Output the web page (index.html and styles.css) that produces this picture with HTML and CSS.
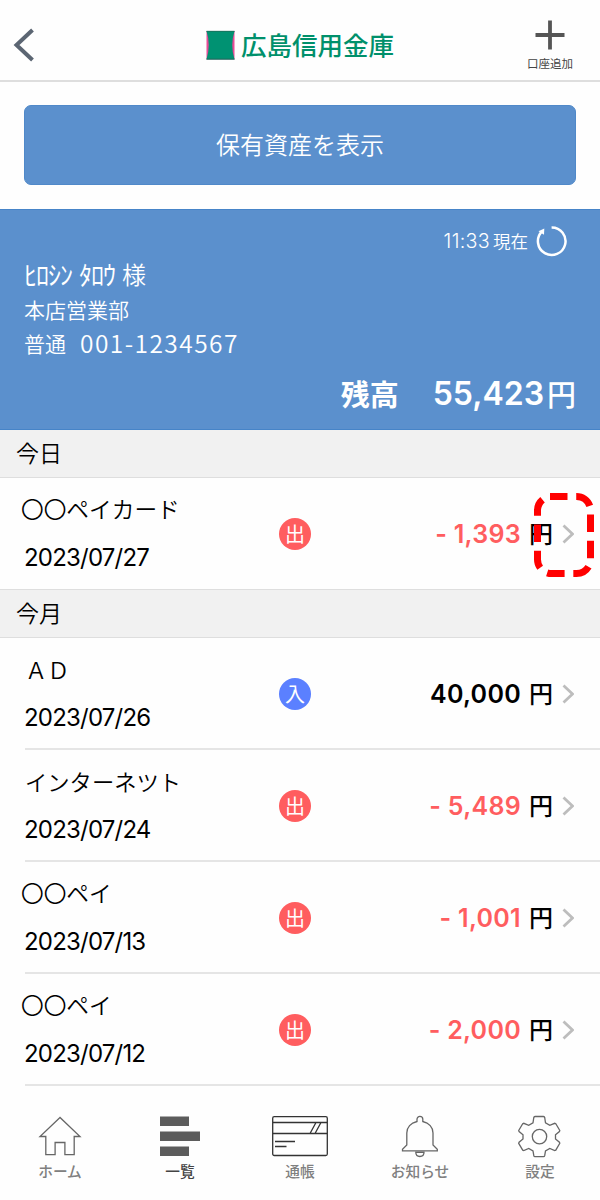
FILE: index.html
```html
<!DOCTYPE html>
<html lang="ja">
<head>
  <meta charset="UTF-8">
  <title>広島信用金庫</title>
  <link rel="stylesheet" href="styles.css">
</head>
<body>
  <header class="header">
    <button class="back-btn" aria-label="戻る">
      <svg width="24" height="36" viewBox="0 0 24 36"><path d="M20.500 3 4.500 18l16 15" fill="none" stroke="#5b6572" stroke-width="4"/></svg>
    </button>
    <div class="brand">
      <svg width="29" height="30" viewBox="0 0 29 30">
        <path d="M.5 1h28v28.500H.5z" fill="#e84a97"/>
        <path d="M.5 1h28q-4.500 14 0 28.500H.5q4.500-14.500 0-28.500z" fill="#009272"/>
        <path d="M.5 1.300h28M.5 29h28" stroke="#1e6b58" stroke-width=".8"/>
      </svg>
      <h1>広島信用金庫</h1>
    </div>
    <button class="add-btn">
      <svg width="30" height="30" viewBox="0 0 30 30"><path d="M15 .5v29M.5 15h29" stroke="#555" stroke-width="3.800"/></svg>
      <span>口座追加</span>
    </button>
  </header>

  <div class="actions">
    <button class="assets-btn">保有資産を表示</button>
  </div>

  <section class="account">
    <div class="updated">
      <span class="time">11:33</span><span>現在</span>
      <svg width="32" height="32" viewBox="0 0 32 32">
        <path d="M15.600 2.400A13.800 13.800 0 1 1 6 6.400" fill="none" stroke="#fff" stroke-width="2.500"/>
        <path d="M2.500 6.200 8.300 3.600 8 9.700z" fill="#fff"/>
      </svg>
    </div>
    <div class="holder"><span class="kana">ﾋﾛｼﾝ</span><span class="kana">ﾀﾛｳ</span><span>様</span></div>
    <div class="branch">本店営業部</div>
    <div class="number"><span>普通</span><span class="digits">001-1234567</span></div>
    <div class="balance"><span>残高</span><span class="total">55,423</span><span class="yen">円</span></div>
  </section>

  <main>
    <h2 class="day">今日</h2>
    <div class="row last">
      <div class="info"><p class="name masked">〇〇ペイカード</p><p class="date">2023/07/27</p></div>
      <span class="badge out">出</span>
      <div class="amount minus">- 1,393</div><span class="unit">円</span>
      <svg class="arrow" width="12" height="20" viewBox="0 0 12 20"><path d="m1.500 1.500 9 8.500-9 8.500"/></svg>
      <svg class="marker" width="60" height="84" viewBox="0 0 60 84"><path d="M16 3.500h26.500a14 14 0 0 1 14 14v49a14 14 0 0 1-14 14h-25a14 14 0 0 1-14-14v-49a14 14 0 0 1 14-14"/></svg>
    </div>

    <h2 class="day">今月</h2>
    <div class="row">
      <div class="info"><p class="name">ＡＤ</p><p class="date">2023/07/26</p></div>
      <span class="badge in">入</span>
      <div class="amount">40,000</div><span class="unit">円</span>
      <svg class="arrow" width="12" height="20" viewBox="0 0 12 20"><path d="m1.500 1.500 9 8.500-9 8.500"/></svg>
    </div>
    <div class="row">
      <div class="info"><p class="name">インターネツト</p><p class="date">2023/07/24</p></div>
      <span class="badge out">出</span>
      <div class="amount minus">- 5,489</div><span class="unit">円</span>
      <svg class="arrow" width="12" height="20" viewBox="0 0 12 20"><path d="m1.500 1.500 9 8.500-9 8.500"/></svg>
    </div>
    <div class="row">
      <div class="info"><p class="name masked">〇〇ペイ</p><p class="date">2023/07/13</p></div>
      <span class="badge out">出</span>
      <div class="amount minus">- 1,001</div><span class="unit">円</span>
      <svg class="arrow" width="12" height="20" viewBox="0 0 12 20"><path d="m1.500 1.500 9 8.500-9 8.500"/></svg>
    </div>
    <div class="row">
      <div class="info"><p class="name masked">〇〇ペイ</p><p class="date">2023/07/12</p></div>
      <span class="badge out">出</span>
      <div class="amount minus">- 2,000</div><span class="unit">円</span>
      <svg class="arrow" width="12" height="20" viewBox="0 0 12 20"><path d="m1.500 1.500 9 8.500-9 8.500"/></svg>
    </div>
  </main>

  <nav class="tabs">
    <a class="tab">
      <svg width="44" height="44" viewBox="0 0 44 44"><path d="M22 3.500 2 22.500h5.800v18.200h9.300V28.500h9.800v12.200h9.300V22.500H42z"/></svg>
      <span>ホーム</span>
    </a>
    <a class="tab active">
      <svg width="44" height="44" viewBox="0 0 44 44"><path d="M2 2.500h29v9.500H2zM2 17.500h40v9.500H2zM2 32.500h29v9.500H2z"/></svg>
      <span>一覧</span>
    </a>
    <a class="tab passbook">
      <svg width="56" height="44" viewBox="0 0 56 44"><rect x=".7" y="2.700" width="54.600" height="38.800" rx="1.500"/><path d="M1 8.500h54M1 19.500h54M3 27.500h20M3 32.500h11.500M44 8.500l-6 11M49 8.500l-6 11"/></svg>
      <span>通帳</span>
    </a>
    <a class="tab">
      <svg width="44" height="44" viewBox="0 0 44 44"><path d="M19 7.500V5.300a2.900 2.900 0 0 1 5.800 0v2.200C31 9 35 13.500 35 19v12l4.300 4.200v1.600H4.500v-1.600L8.800 31V19c0-5.500 4-10 10.200-11.500zM17.800 38.300H26c0 5.600-8.200 5.600-8.200 0z"/></svg>
      <span>お知らせ</span>
    </a>
    <a class="tab">
      <svg width="44" height="44" viewBox="0 0 44 44"><path d="M17 2.500h8.500q1 0 1.200 1l.8 5.300 4.300 2.500 4.900-2 1.100.4 4 6.800-.4 1.100-3.900 3.200v4.200l3.900 3.200.4 1.100-4 6.800-1.100.4-4.900-2-4.300 2.500-.8 4.700q-.2 1-1.200 1H17q-1 0-1.200-1L15 37l-4.300-2.500-4.900 2-1.100-.4-4-6.800.4-1.100L5 25v-4.200l-3.900-3.200-.4-1.100 4-6.800 1.100-.4 4.900 2L15 8.800l.8-5.300q.2-1 1.200-1z"/><circle cx="21.500" cy="22.600" r="7.200"/></svg>
      <span>設定</span>
    </a>
  </nav>
</body>
</html>
```

FILE: styles.css
```css
:root {
  --blue: #5b90cd;
  --red: #ff5d5f;
  --line: #dedede;
  --jp: "Noto Sans CJK JP", sans-serif;
  --num: Inter, "Noto Sans CJK JP", sans-serif;
}

* {
  margin: 0;
  padding: 0;
  box-sizing: border-box;
}

body {
  width: 600px;
  height: 1200px;
  overflow: hidden;
  background: #fefefe;
  color: #000;
  font-family: var(--jp);
}

button {
  border: none;
  background: none;
  font-family: inherit;
}

svg {
  display: block;
  flex: none;
}

.header {
  height: 82px;
  border-bottom: 2px solid var(--line);
  display: grid;
  grid-template-columns: 100px 1fr 100px;
}

.back-btn {
  display: flex;
  align-items: flex-start;
  padding: 27px 0 0 12px;
}

.brand {
  display: flex;
  align-items: flex-start;
  justify-content: center;
  gap: 6px;
  padding-top: 30px;
}

.brand h1 {
  margin-top: -1px;
  color: #00906b;
  font-size: 25.500px;
  font-weight: 500;
  line-height: 30px;
}

.add-btn {
  display: flex;
  flex-direction: column;
  align-items: center;
  padding-top: 20px;
}

.add-btn span {
  margin-top: 5px;
  font-size: 11.500px;
  line-height: 16px;
  color: #444;
}

.actions {
  height: 127px;
  padding: 23px 24px 0;
}

.assets-btn {
  width: 100%;
  height: 80px;
  padding-bottom: 3px;
  border: 1px solid #5089c9;
  border-radius: 7px;
  background: var(--blue);
  color: #fff;
  font-size: 24px;
  font-weight: 350;
}

.account {
  height: 221px;
  padding: 15px 24px 0;
  background: var(--blue);
  border-top: 1px solid #4684c8;
  border-bottom: 1px solid #4684c8;
  color: #fff;
  font-weight: 350;
}

.updated {
  display: flex;
  align-items: center;
  justify-content: flex-end;
  height: 31px;
  padding-right: 8px;
  font-size: 17.500px;
  line-height: 28px;
}

.updated .time {
  font-family: var(--num);
  font-size: 19.700px;
  letter-spacing: .3px;
  margin-right: 3px;
}

.updated svg {
  margin-left: 8px;
}

.holder {
  display: flex;
  height: 36px;
  font-size: 24px;
  line-height: 35px;
}

.kana {
  margin-right: 7px;
  font-size: 26px;
  font-weight: 400;
  letter-spacing: -1px;
}

.branch {
  font-size: 21px;
  line-height: 34px;
}

.number {
  display: flex;
  font-size: 21px;
  line-height: 34px;
}

.digits {
  margin-left: 14px;
  font-size: 24.500px;
  letter-spacing: 1.450px;
}

.balance {
  display: flex;
  justify-content: flex-end;
  margin-top: 14px;
  font-size: 29px;
  font-weight: 700;
  line-height: 38px;
}

.total {
  margin: 1px 3px 0 34px;
  font-family: var(--num);
  font-size: 32px;
  font-weight: 600;
}

.yen {
  font-weight: 500;
}

.day {
  height: 48px;
  padding-left: 16px;
  background: #f1f1f1;
  border-bottom: 1px solid var(--line);
  font-size: 23px;
  font-weight: 350;
  line-height: 45px;
}

.row {
  position: relative;
  display: flex;
  align-items: center;
  height: 112px;
  margin-left: 25px;
  padding: 1px 26px 0 0;
  border-bottom: 2px solid #e5e5e5;
}

.row.last {
  margin-left: 0;
  padding: 0 26px 0 25px;
  border-bottom: 1px solid var(--line);
}

.info {
  width: 254px;
}

.name {
  margin-top: -1px;
  font-size: 22.300px;
  font-weight: 350;
  line-height: 36px;
}

.name.masked {
  margin-left: -4px;
  font-size: 22.700px;
}

.date {
  margin: 13px 0 0 -1px;
  font-family: var(--num);
  font-size: 24px;
  letter-spacing: -.800px;
  line-height: 36px;
}

.badge {
  width: 32px;
  height: 32px;
  border-radius: 50%;
  color: #fff;
  font-size: 20px;
  line-height: 31px;
  text-align: center;
}

.badge.out {
  background: var(--red);
}

.badge.in {
  background: #5b80ff;
}

.amount {
  margin-left: auto;
  font-family: var(--num);
  font-size: 25px;
  font-weight: 600;
  letter-spacing: .3px;
}

.amount.minus {
  color: var(--red);
}

.unit {
  margin: -3px 9px 0 8px;
  font-size: 24px;
  font-weight: 500;
}

.arrow path {
  fill: none;
  stroke: #bdbdbd;
  stroke-width: 2.800;
}

/* dashed frame over the row arrow */
.marker {
  position: absolute;
  top: 15px;
  right: 6px;
}

.marker path {
  fill: none;
  stroke: #f00;
  stroke-width: 7;
  stroke-dasharray: 17.500 8.720;
}

.tabs {
  display: grid;
  grid-template-columns: repeat(5, 120px);
  padding-top: 28px;
}

.tab {
  display: flex;
  flex-direction: column;
  align-items: center;
  color: #808080;
  font-size: 14.700px;
  font-weight: 500;
  line-height: 22px;
}

.tab svg {
  fill: none;
  stroke: #666;
  stroke-width: 1.300;
}

.tab span {
  margin-top: 2px;
}

.tab.active {
  color: #444;
}

.tab.active svg {
  fill: #5c5c5c;
  stroke: none;
}

.passbook svg {
  stroke: #333;
}
```
